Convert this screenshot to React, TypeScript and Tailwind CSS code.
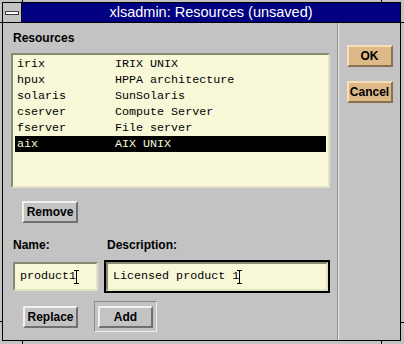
import React from 'react';

const sans = "font-['Liberation_Sans',Arial,sans-serif]";
const mono = "font-['Liberation_Mono','Courier_New',monospace]";

const rows = [
  ['irix', 'IRIX UNIX'],
  ['hpux', 'HPPA architecture'],
  ['solaris', 'SunSolaris'],
  ['cserver', 'Compute Server'],
  ['fserver', 'File server'],
  ['aix', 'AIX UNIX'],
];

function Cursor() {
  return (
    <svg width="5" height="14" viewBox="0 0 5 14" className="inline-block -ml-[2px] align-[-3px]">
      <path d="M0 0.5H5M0 13.5H5M2.5 0V14" stroke="black" strokeWidth="1" fill="none" />
    </svg>
  );
}

function GrayButton({ label, w }: { label: string; w: string }) {
  return (
    <div className={`${w} h-[22px] border-2 border-t-[#f0f0f0] border-l-[#f0f0f0] border-b-[#707070] border-r-[#707070] bg-[#c3c3c3] flex items-center justify-center text-[12px] font-bold text-black ${sans}`}>
      {label}
    </div>
  );
}

function TanButton({ label }: { label: string }) {
  return (
    <div className={`w-[46px] h-[22px] border-2 border-t-[#f6dfb8] border-l-[#f6dfb8] border-b-[#8b7050] border-r-[#8b7050] bg-[#deb887] flex items-center justify-center text-[12px] font-bold text-black ${sans}`}>
      {label}
    </div>
  );
}

export default function App() {
  return (
    <div className="relative w-[404px] h-[344px] bg-[#c3c3c3] pt-[2px] pl-[2px] overflow-hidden">
      {/* frame corner ticks */}
      <div className="absolute left-[22px] top-0 w-px h-[2px] bg-black"></div>
      <div className="absolute left-[381px] top-0 w-px h-[2px] bg-black"></div>
      <div className="absolute left-0 top-[22px] w-[2px] h-px bg-black"></div>
      <div className="absolute right-0 top-[22px] w-[3px] h-px bg-black"></div>
      <div className="absolute left-0 top-[321px] w-[2px] h-px bg-black"></div>
      <div className="absolute right-0 top-[322px] w-[3px] h-px bg-black"></div>
      <div className="absolute left-[22px] bottom-0 w-px h-[3px] bg-black"></div>
      <div className="absolute left-[381px] bottom-0 w-px h-[3px] bg-black"></div>

      <div className="w-[399px] h-[339px] border border-black flex flex-col">
        {/* title bar */}
        <div className="h-[20px] flex border-b border-black">
          <div className="w-[19px] h-[19px] bg-[#c3c3c3] border-r border-black flex items-center justify-center">
            <div className="w-[14px] h-[4px] border border-[#404040] bg-white"></div>
          </div>
          <div className={`flex-1 bg-[#000080] text-white text-[14.5px] leading-[19px] text-center ${sans}`}>
            xlsadmin: Resources (unsaved)
          </div>
        </div>

        {/* body */}
        <div className="flex-1 flex bg-[#c3c3c3]">
          <div className="w-[334px] flex flex-col">
            <div className={`mt-[8px] ml-[10px] h-[14px] leading-[14px] text-[12px] font-bold text-black ${sans}`}>Resources</div>

            <div className="mt-[8px] ml-[8px] w-[319px] h-[135px] border-2 border-t-[#8a8a70] border-l-[#8a8a70] border-b-[#e2e2c4] border-r-[#e2e2c4] bg-[#f8f8d8] px-[2px] pt-[1px]">
              {rows.map(([name, desc], i) => {
                const sel = i === rows.length - 1;
                return (
                  <div
                    key={name}
                    className={`h-[16px] flex items-center pl-[2px] pt-[1px] text-[11.7px] ${mono} ${sel ? 'bg-black text-[#f8f8d8]' : 'text-black'}`}
                  >
                    <span className="w-[98px] shrink-0">{name}</span>
                    <span>{desc}</span>
                  </div>
                );
              })}
            </div>

            <div className="mt-[13px] ml-[19px]">
              <GrayButton label="Remove" w="w-[56px]" />
            </div>

            <div className={`mt-[15px] flex h-[14px] leading-[14px] text-[12px] font-bold text-black ${sans}`}>
              <span className="ml-[10px] w-[94px]">Name:</span>
              <span>Description:</span>
            </div>

            <div className="mt-[8px] flex items-center">
              <div className={`ml-[10px] w-[85px] h-[29px] border-2 border-t-[#8a8a70] border-l-[#8a8a70] border-b-[#e2e2c4] border-r-[#e2e2c4] bg-[#f8f8d8] pl-[5px] flex items-center text-[11.7px] text-black ${mono}`}>
                <span>product1</span>
                <Cursor />
              </div>
              <div className="ml-[6px] w-[226px] h-[33px] border-2 border-black">
                <div className={`w-full h-full border-2 border-t-[#8a8a70] border-l-[#8a8a70] border-b-[#e2e2c4] border-r-[#e2e2c4] bg-[#f8f8d8] pl-[5px] flex items-center text-[11.7px] text-black ${mono}`}>
                  <span>Licensed product 1</span>
                  <Cursor />
                </div>
              </div>
            </div>

            <div className="mt-[8px] flex items-center">
              <div className="ml-[20px]">
                <GrayButton label="Replace" w="w-[55px]" />
              </div>
              <div className="ml-[16px] w-[63px] h-[31px] border border-t-[#8a8a8a] border-l-[#8a8a8a] border-b-[#f0f0f0] border-r-[#f0f0f0] flex items-center justify-center">
                <GrayButton label="Add" w="w-[55px]" />
              </div>
            </div>
          </div>

          {/* separator */}
          <div className="w-[2px] border-l border-[#8a8a8a] bg-[#ececec]"></div>

          <div className="flex-1 flex flex-col items-center">
            <div className="mt-[22px]">
              <TanButton label="OK" />
            </div>
            <div className="mt-[14px]">
              <TanButton label="Cancel" />
            </div>
          </div>
        </div>
      </div>
    </div>
  );
}
